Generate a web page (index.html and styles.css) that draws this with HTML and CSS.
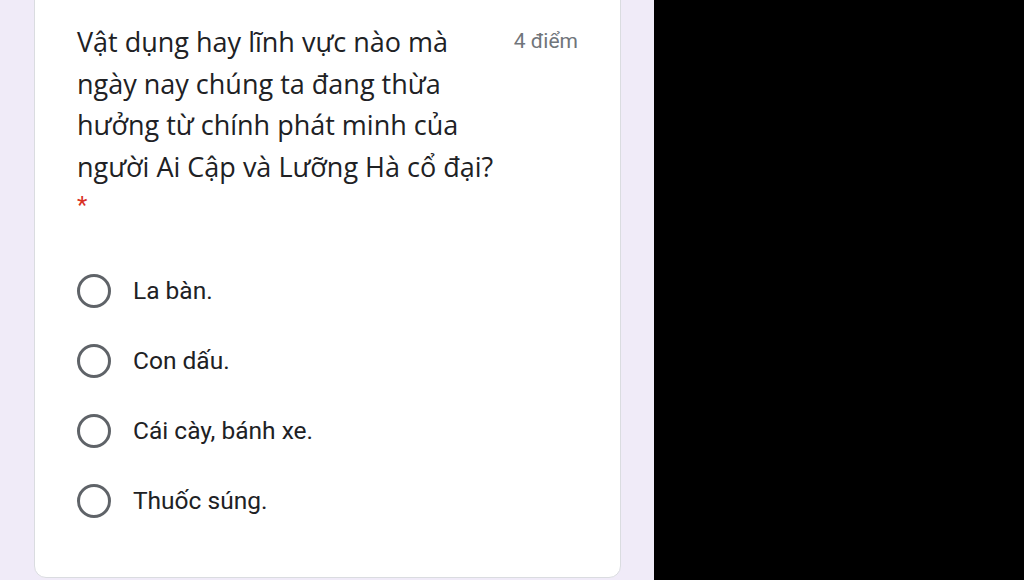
FILE: index.html
```html
<!DOCTYPE html>
<html lang="vi">
<head>
    <meta charset="UTF-8">
    <title>Câu hỏi</title>
    <link rel="stylesheet" href="styles.css">
</head>
<body>
    <div class="form-side">
        <div class="card">
            <div class="question-head">
                <div class="question-title">Vật dụng hay lĩnh vực nào mà ngày nay chúng ta đang thừa hưởng từ chính phát minh của người Ai Cập và Lưỡng Hà cổ đại?</div>
                <div class="points">4 điểm</div>
            </div>
            <div class="required">*</div>
            <div class="options">
                <label class="option"><span class="radio"></span><span class="option-text">La bàn.</span></label>
                <label class="option"><span class="radio"></span><span class="option-text">Con dấu.</span></label>
                <label class="option"><span class="radio"></span><span class="option-text">Cái cày, bánh xe.</span></label>
                <label class="option"><span class="radio"></span><span class="option-text">Thuốc súng.</span></label>
            </div>
        </div>
    </div>
    <div class="black-side"></div>
</body>
</html>
```

FILE: styles.css
```css
body {
    margin: 0;
    height: 580px;
    display: flex;
    overflow: hidden;
    font-family: Roboto, "Liberation Sans", sans-serif;
    color: #202124;
}

.form-side {
    width: 654px;
    background: #f0ebf8;
}

.black-side {
    flex: 1;
    background: #000;
}

.card {
    box-sizing: border-box;
    margin: -20px 0 0 34px;
    width: 587px;
    height: 598px;
    background: #fff;
    border: 1.5px solid #dadce0;
    border-radius: 12px;
    padding: 40px 42px 0 42px;
}

.question-head {
    display: flex;
    justify-content: space-between;
}

.question-title {
    width: 430px;
    font-family: "Open Sans", sans-serif;
    font-size: 27px;
    line-height: 41.5px;
}

.points {
    font-size: 21px;
    color: #70757a;
    padding-top: 8px;
}

.required {
    color: #d93025;
    font-size: 24px;
    line-height: 30px;
    margin-top: 3px;
}

.options {
    display: flex;
    flex-direction: column;
    gap: 35px;
    margin-top: 53px;
}

.option {
    display: flex;
    align-items: center;
    gap: 22px;
    height: 35px;
}

.radio {
    box-sizing: border-box;
    width: 34px;
    height: 34px;
    border: 3px solid #5f6368;
    border-radius: 50%;
}

.option-text {
    font-size: 24.5px;
}
```
